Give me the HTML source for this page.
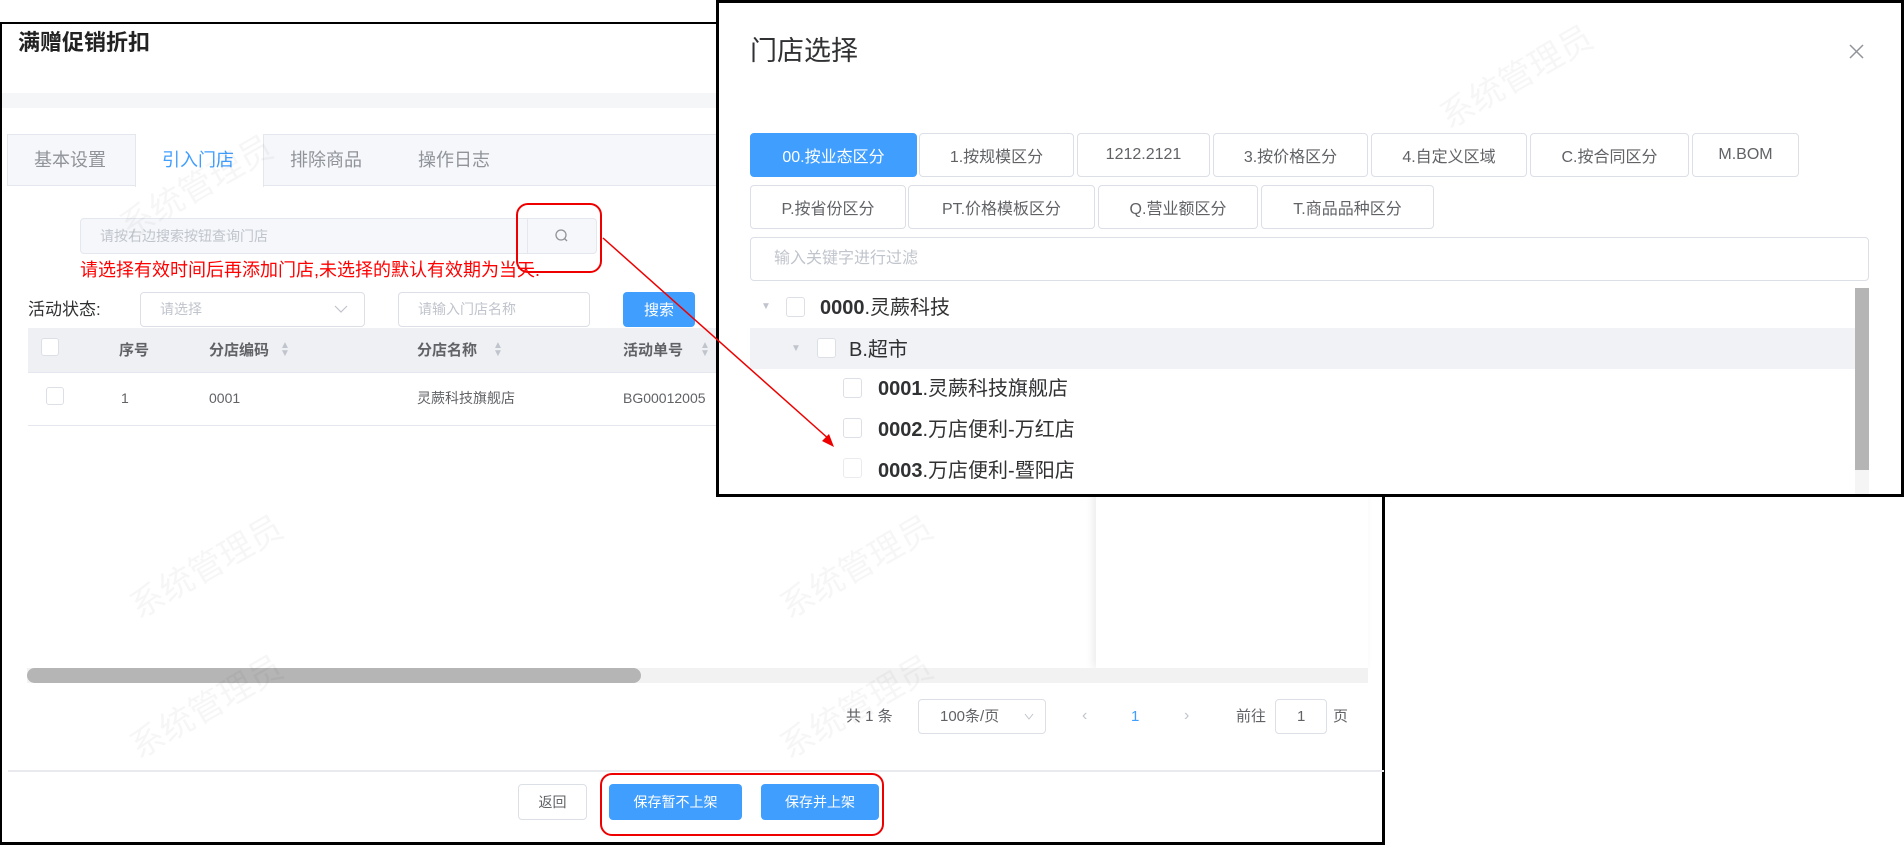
<!DOCTYPE html>
<html><head><meta charset="utf-8"><style>
*{box-sizing:border-box;margin:0;padding:0}
body{width:1904px;height:845px;position:relative;background:#fff;font-family:"Liberation Sans","Noto Sans CJK SC",sans-serif;overflow:hidden;color:#606266}
.a{position:absolute}
.t{position:absolute;white-space:nowrap;line-height:1}
.cb{position:absolute;width:18px;height:18px;border:1px solid #dcdfe6;border-radius:3px;background:#fff}
.btn{position:absolute;display:flex;align-items:center;justify-content:center;border-radius:4px;font-size:15px}
.tag{position:absolute;top:133px;height:44px;border:1px solid #dcdfe6;border-radius:4px;display:flex;align-items:center;justify-content:center;font-size:16px;color:#606266;background:#fff}
.wm{position:absolute;color:rgba(0,0,0,0.035);font-size:34px;transform:rotate(-30deg);white-space:nowrap}
</style></head><body>
<div class="a" style="left:0;top:22px;width:1385px;height:823px;border:2px solid #000;border-right-width:3px;border-bottom-width:3px"></div>
<div class="t" style="left:18px;top:32px;font-size:22px;font-weight:bold;color:#222">满赠促销折扣</div>
<div class="a" style="left:2px;top:93px;width:1381px;height:15px;background:#f5f6f8"></div>
<div class="a" style="left:7px;top:134px;width:1376px;height:52px;background:#f5f7fa;border:1px solid #e4e7ed"></div>
<div class="a" style="left:135px;top:134px;width:129px;height:53px;background:#fff;border-left:1px solid #e4e7ed;border-right:1px solid #e4e7ed"></div>
<div class="t" style="left:34px;top:151px;font-size:18px;color:#909399">基本设置</div>
<div class="t" style="left:162px;top:151px;font-size:18px;color:#409eff">引入门店</div>
<div class="t" style="left:290px;top:151px;font-size:18px;color:#909399">排除商品</div>
<div class="t" style="left:418px;top:151px;font-size:18px;color:#909399">操作日志</div>
<div class="a" style="left:80px;top:218px;width:517px;height:36px;background:#f5f7fa;border:1px solid #e4e7ed;border-radius:4px"></div>
<div class="a" style="left:527px;top:218px;width:1px;height:36px;background:#e4e7ed"></div>
<div class="t" style="left:100px;top:229px;font-size:14px;color:#c0c4cc">请按右边搜索按钮查询门店</div>
<svg class="a" style="left:554px;top:228px" width="16" height="16"><circle cx="7" cy="7" r="5" fill="none" stroke="#909399" stroke-width="1.3"/><line x1="10.5" y1="10.5" x2="13" y2="13" stroke="#909399" stroke-width="1.3"/></svg>
<div class="a" style="left:516px;top:203px;width:86px;height:70px;border:2px solid #e00;border-radius:12px"></div>
<div class="t" style="left:80px;top:261px;font-size:18px;color:#f00">请选择有效时间后再添加门店,未选择的默认有效期为当天.</div>
<div class="t" style="left:28px;top:301px;font-size:17px;color:#303133">活动状态:</div>
<div class="a" style="left:140px;top:292px;width:225px;height:35px;border:1px solid #dcdfe6;border-radius:4px"></div>
<div class="t" style="left:160px;top:302px;font-size:14px;color:#c0c4cc">请选择</div>
<svg class="a" style="left:334px;top:304px" width="14" height="10"><path d="M1 2 L7 8 L13 2" fill="none" stroke="#c0c4cc" stroke-width="1.2"/></svg>
<div class="a" style="left:398px;top:292px;width:192px;height:35px;border:1px solid #dcdfe6;border-radius:4px"></div>
<div class="t" style="left:418px;top:302px;font-size:14px;color:#c0c4cc">请输入门店名称</div>
<div class="btn" style="left:623px;top:292px;width:72px;height:35px;background:#409eff;color:#fff">搜索</div>
<div class="a" style="left:28px;top:328px;width:1355px;height:45px;background:#eef0f4;border-bottom:1px solid #e4e7ed"></div>
<div class="cb" style="left:41px;top:338px"></div>
<div class="t" style="left:119px;top:343px;font-size:15px;font-weight:bold;color:#606266">序号</div>
<div class="t" style="left:209px;top:343px;font-size:15px;font-weight:bold;color:#606266">分店编码</div>
<div class="t" style="left:280px;top:342px;font-size:10px;color:#c0c4cc;line-height:8px">▲<br>▼</div>
<div class="t" style="left:417px;top:343px;font-size:15px;font-weight:bold;color:#606266">分店名称</div>
<div class="t" style="left:493px;top:342px;font-size:10px;color:#c0c4cc;line-height:8px">▲<br>▼</div>
<div class="t" style="left:623px;top:343px;font-size:15px;font-weight:bold;color:#606266">活动单号</div>
<div class="t" style="left:700px;top:342px;font-size:10px;color:#c0c4cc;line-height:8px">▲<br>▼</div>
<div class="cb" style="left:46px;top:387px"></div>
<div class="t" style="left:121px;top:391px;font-size:14px">1</div>
<div class="t" style="left:209px;top:391px;font-size:14px">0001</div>
<div class="t" style="left:417px;top:391px;font-size:14px">灵蕨科技旗舰店</div>
<div class="t" style="left:623px;top:391px;font-size:14px">BG00012005</div>
<div class="a" style="left:28px;top:425px;width:1355px;height:1px;background:#e4e7ed"></div>
<div class="a" style="left:1096px;top:480px;width:272px;height:188px;background:#fff;box-shadow:-3px 0 8px rgba(0,0,0,0.08)"></div>
<div class="a" style="left:27px;top:668px;width:1341px;height:15px;background:#f2f2f2"></div>
<div class="a" style="left:27px;top:668px;width:614px;height:15px;background:#b5b5b5;border-radius:8px"></div>
<div class="t" style="left:846px;top:709px;font-size:15px;color:#606266">共 1 条</div>
<div class="a" style="left:918px;top:699px;width:128px;height:35px;border:1px solid #dcdfe6;border-radius:4px"></div>
<div class="t" style="left:940px;top:709px;font-size:15px">100条/页</div>
<svg class="a" style="left:1024px;top:713px" width="10" height="8"><path d="M1 1 L5 6 L9 1" fill="none" stroke="#c0c4cc"/></svg>
<div class="t" style="left:1082px;top:708px;font-size:16px;color:#c0c4cc">‹</div>
<div class="t" style="left:1131px;top:709px;font-size:15px;color:#409eff">1</div>
<div class="t" style="left:1184px;top:708px;font-size:16px;color:#c0c4cc">›</div>
<div class="t" style="left:1236px;top:709px;font-size:15px">前往</div>
<div class="a" style="left:1275px;top:699px;width:52px;height:35px;border:1px solid #dcdfe6;border-radius:4px"></div>
<div class="t" style="left:1297px;top:709px;font-size:15px">1</div>
<div class="t" style="left:1333px;top:709px;font-size:15px">页</div>
<div class="a" style="left:8px;top:770px;width:1376px;height:2px;background:#e8eaee"></div>
<div class="btn" style="left:518px;top:784px;width:69px;height:36px;border:1px solid #dcdfe6;color:#606266;font-size:14px">返回</div>
<div class="btn" style="left:609px;top:784px;width:133px;height:36px;background:#409eff;color:#fff;font-size:14px">保存暂不上架</div>
<div class="btn" style="left:761px;top:784px;width:118px;height:36px;background:#409eff;color:#fff;font-size:14px">保存并上架</div>
<div class="a" style="left:600px;top:773px;width:284px;height:63px;border:2px solid #e00;border-radius:12px"></div>
<div class="wm" style="left:120px;top:540px">系统管理员</div>
<div class="wm" style="left:770px;top:540px">系统管理员</div>
<div class="wm" style="left:120px;top:680px">系统管理员</div>
<div class="wm" style="left:770px;top:680px">系统管理员</div>
<div class="wm" style="left:110px;top:160px">系统管理员</div>
<div class="a" style="left:716px;top:0;width:1188px;height:497px;background:#fff;border:3px solid #000"></div>
<div class="t" style="left:750px;top:38px;font-size:27px;color:#303133">门店选择</div>
<svg class="a" style="left:1849px;top:44px" width="15" height="15"><path d="M1 1 L14 14 M14 1 L1 14" stroke="#909399" stroke-width="1.5"/></svg>
<div class="wm" style="left:1430px;top:50px">系统管理员</div>
<div class="tag" style="left:750px;width:167px;background:#409eff;border-color:#409eff;color:#fff">00.按业态区分</div>
<div class="tag" style="left:919px;width:155px">1.按规模区分</div>
<div class="tag" style="left:1077px;width:133px">1212.2121</div>
<div class="tag" style="left:1213px;width:155px">3.按价格区分</div>
<div class="tag" style="left:1371px;width:156px">4.自定义区域</div>
<div class="tag" style="left:1530px;width:159px">C.按合同区分</div>
<div class="tag" style="left:1692px;width:107px">M.BOM</div>
<div class="tag" style="left:750px;top:185px;width:156px">P.按省份区分</div>
<div class="tag" style="left:908px;top:185px;width:187px">PT.价格模板区分</div>
<div class="tag" style="left:1098px;top:185px;width:160px">Q.营业额区分</div>
<div class="tag" style="left:1261px;top:185px;width:173px">T.商品品种区分</div>
<div class="a" style="left:750px;top:237px;width:1119px;height:44px;border:1px solid #dcdfe6;border-radius:4px"></div>
<div class="t" style="left:774px;top:251px;font-size:16px;color:#c0c4cc">输入关键字进行过滤</div>
<div class="a" style="left:750px;top:328px;width:1105px;height:41px;background:#f0f2f5"></div>
<div class="t" style="left:761px;top:302px;font-size:10px;color:#c0c4cc">▼</div>
<div class="cb" style="left:786px;top:297px;width:19px;height:20px"></div>
<div class="t" style="left:820px;top:298px;font-size:20px;color:#303133"><b>0000</b>.灵蕨科技</div>
<div class="t" style="left:791px;top:344px;font-size:10px;color:#c0c4cc">▼</div>
<div class="cb" style="left:817px;top:338px;width:19px;height:20px"></div>
<div class="t" style="left:849px;top:340px;font-size:20px;color:#303133">B.超市</div>
<div class="cb" style="left:843px;top:378px;width:19px;height:20px"></div>
<div class="t" style="left:878px;top:379px;font-size:20px;color:#303133"><b>0001</b>.灵蕨科技旗舰店</div>
<div class="cb" style="left:843px;top:418px;width:19px;height:20px"></div>
<div class="t" style="left:878px;top:420px;font-size:20px;color:#303133"><b>0002</b>.万店便利-万红店</div>
<div class="cb" style="left:843px;top:458px;width:19px;height:20px;opacity:.6"></div>
<div class="t" style="left:878px;top:461px;font-size:20px;color:#303133"><b>0003</b>.万店便利-暨阳店</div>
<div class="a" style="left:1855px;top:288px;width:14px;height:182px;background:#b5b5b5"></div>
<div class="a" style="left:1855px;top:470px;width:14px;height:24px;background:#f5f5f5"></div>
<svg class="a" style="left:0;top:0" width="1904" height="845"><line x1="603" y1="238" x2="830" y2="440" stroke="#e00" stroke-width="1.5"/><path d="M834 447 L822 441 L829 434 Z" fill="#e00"/></svg>
</body></html>
